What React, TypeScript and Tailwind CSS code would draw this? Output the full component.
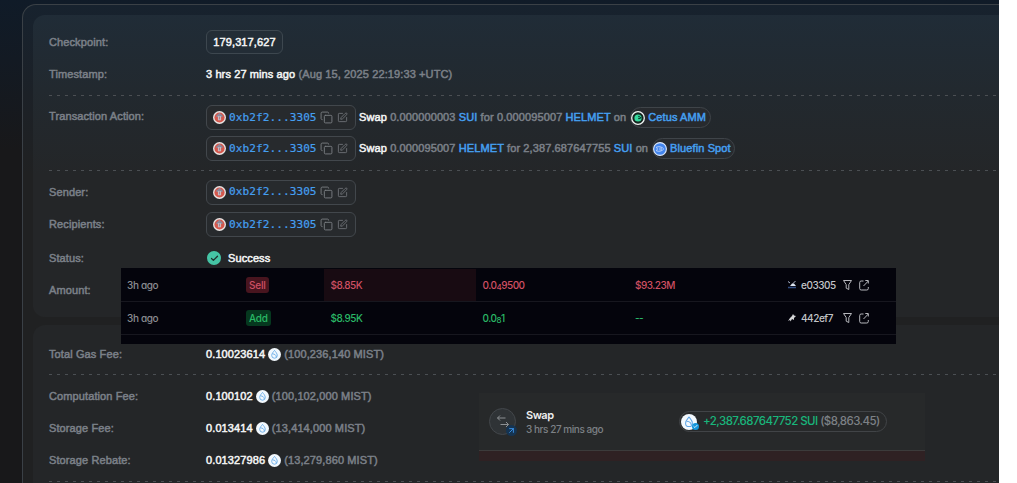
import type { ReactNode } from 'react';
import { Copy, SquarePen, ArrowUpRight, Check } from 'lucide-react';

function Row({ label, className, children }: { label: string; className: string; children?: ReactNode }) {
    return (
        <div className={`flex items-center ${className}`}>
            <div className="w-[157px] shrink-0 text-[#7b8088]">{label}</div>
            <div className="flex items-center whitespace-pre">{children}</div>
        </div>
    );
}

function Divider() {
    return <div className="h-px shrink-0 bg-[repeating-linear-gradient(90deg,#4b4f53_0_3px,transparent_3px_8px)]" />;
}

function Avatar() {
    return (
        <svg viewBox="0 0 14 14" className="size-[13px] shrink-0">
            <circle cx="7" cy="7" r="7" fill="#e8e4e3" />
            <circle cx="7" cy="7" r="5.5" fill="#d4574c" />
            <path d="M3.2 5.5 7 2l3.800 3.500-1 1H4.200z" fill="#8e8798" />
            <path d="M5.300 5.500h3.400v4.500H5.300z" fill="#c9b9be" />
            <path d="M7 6v3" stroke="#8c748e" strokeWidth=".8" />
        </svg>
    );
}

function Address() {
    return (
        <div className="flex h-[25px] w-[150px] shrink-0 items-center rounded-[6px] border border-[#42474c] bg-[#272a2d] pl-[6px]">
            <Avatar />
            <span className="ml-[3px] w-[87px] pt-px font-[DejaVu_Sans_Mono,monospace] text-[11.1px] font-normal tracking-[0.06px] text-[#459ff0] [-webkit-text-stroke:0.2px]">
                0xb2f2...3305
            </span>
            <Copy className="ml-[4px] size-[13px] text-[#767a7e]" strokeWidth={1.8} />
            <SquarePen className="ml-[4px] size-[11px] text-[#767a7e]" strokeWidth={1.8} />
        </div>
    );
}

function SuiIcon({ className }: { className: string }) {
    return (
        <svg viewBox="0 0 14 14" className={`shrink-0 ${className}`}>
            <circle cx="7" cy="7" r="7" fill="#f2f8fd" />
            <path
                d="M7 2.6C5.8 4.1 4 6 4 8a3 3 0 0 0 6 0c0-2-1.8-3.9-3-5.4Z"
                fill="none"
                stroke="#5fa6e6"
                strokeWidth=".9"
            />
            <path d="M5 6.3c2 .2 4 1.2 4 3.5" fill="none" stroke="#5fa6e6" strokeWidth=".9" />
        </svg>
    );
}

function CetusIcon() {
    return (
        <svg viewBox="0 0 14 14" className="size-[14px] shrink-0">
            <circle cx="7" cy="7" r="6.3" fill="#12251f" stroke="#f0f2f2" strokeWidth="1.3" />
            <circle cx="7" cy="7" r="3.6" fill="#35d89c" />
            <path d="M7.2 7.5c1.2.3 2.3-.3 2.8-1.5" fill="none" stroke="#10382b" strokeWidth="1.2" />
            <circle cx="8" cy="5.6" r=".8" fill="#10382b" />
        </svg>
    );
}

function BluefinIcon() {
    return (
        <svg viewBox="0 0 14 14" className="size-[14px] shrink-0">
            <circle cx="7" cy="7" r="6.4" fill="#4385ee" stroke="#dce8fb" strokeWidth="1.1" />
            <path
                d="M3.3 5.2c3-1.2 6-.2 7.4 1.8-1.5 2-4.5 3-7.4 1.8M3.3 5.2c1.3 1 1.3 2.6 0 3.6"
                fill="none"
                stroke="#cfe0fb"
                strokeWidth=".8"
            />
            <circle cx="7.6" cy="7" r="1" fill="none" stroke="#cfe0fb" strokeWidth=".6" />
        </svg>
    );
}

function Protocol({ name, width, children }: { name: string; width: string; children: ReactNode }) {
    return (
        <div className={`ml-[4px] flex h-[21px] items-center gap-[3px] rounded-full border border-[#3f4449] bg-[#272a2e] text-[#459ff0] ${width}`}>
            {children}
            <span>{name}</span>
        </div>
    );
}

function Fee({ value, mist }: { value: string; mist: string }) {
    return (
        <>
            <span className="text-[#f4f5f5]">{value}</span>
            <SuiIcon className="mx-[3px] size-[13px]" />
            <span className="text-[#7b8088]">({mist} MIST)</span>
        </>
    );
}

function TradeTools() {
    return (
        <svg viewBox="0 0 28 12" className="ml-[7px] h-[12px] w-[28px]" fill="none" stroke="#b6b7bc" strokeWidth="1">
            <path d="M1.5 1.5h8L6.8 5.6v4.9l-2.6-1.3V5.6Z" strokeLinejoin="round" />
            <path d="M21.5 2h-2.3a1.5 1.5 0 0 0-1.5 1.5v6A1.5 1.5 0 0 0 19.2 11h5.6a1.5 1.5 0 0 0 1.5-1.5V8M21.5 7l4.8-5M23.3 1.5h3v3" />
        </svg>
    );
}

const TRADES = [
    { kind: 'Sell', value: '$8.85K', lead: '0.0', sub: '4', rest: '9500', cap: '$93.23M', wallet: 'e03305' },
    { kind: 'Add', value: '$8.95K', lead: '0.0', sub: '8', rest: '1', cap: '--', wallet: '442ef7' }
];

function Trades() {
    return (
        <div className="absolute top-[268px] left-[121px] h-[76px] w-[775px] bg-[#04040c] pt-px font-[Inter,sans-serif] text-[10px] font-medium tracking-[-0.5px] [-webkit-text-stroke:0px]">
            {TRADES.map(t => {
                const sell = t.kind === 'Sell';
                return (
                    <div
                        key={t.kind}
                        className={`flex h-[33px] items-stretch border-b border-[#17171f] *:flex *:items-center ${sell ? 'text-[#cf5063]' : 'text-[#2ab866]'}`}
                    >
                        <div className="w-[125px] pl-[6px] tracking-[-0.35px] text-[#8b8c92] [font-feature-settings:'cv11']">3h ago</div>
                        <div className="w-[78px]">
                            <span className={`flex h-[16px] items-center rounded-[3px] px-[3px] tracking-[-0.2px] ${sell ? 'bg-[#48151f]' : 'bg-[#06381f]'}`}>
                                {t.kind}
                            </span>
                        </div>
                        <div className={`w-[152px] pl-[6.5px] ${sell ? 'bg-[#180b12]' : ''}`}>{t.value}</div>
                        <div className="w-[152px] pl-[6.5px]">
                            {t.lead}
                            <span className="relative top-[2px] text-[8px]">{t.sub}</span>
                            {t.rest}
                        </div>
                        <div className="w-[159px] pl-[7px]">{t.cap}</div>
                        <div className="tracking-[-0.45px] text-[#c3c4c8]">
                            <svg viewBox="0 0 10 10" className="mr-[4px] size-[10px]">
                                {sell ? (
                                    <>
                                        <path d="m1 1.5 2 1.5M8.5 1 6 3.5" stroke="#aeb8cc" />
                                        <path d="M3 6 5 3.5h2L9 6Z" fill="#dce3ef" />
                                        <path d="M1 7.5h8" stroke="#304d83" strokeWidth="1.5" />
                                    </>
                                ) : (
                                    <path d="m6 1 1 1.5L9 3 7 5v2L5 6 3.5 8.5 3 7 1 8l2-3 2-2Z" fill="#d5d6d8" />
                                )}
                            </svg>
                            <span className="w-[34px]">{t.wallet}</span>
                            <TradeTools />
                        </div>
                    </div>
                );
            })}
        </div>
    );
}

function SwapCard() {
    return (
        <div className="absolute top-[393px] left-[479px] flex h-[68px] w-[446px] flex-col bg-[#27292a] font-[Inter,sans-serif] [-webkit-text-stroke:0px]">
            <div className="flex h-[58px] items-center border-b border-[#3c3b3b] pl-[10px]">
                <div className="relative flex size-[27px] items-center justify-center rounded-full border border-[#43474b] bg-[#2f3336]">
                    <svg viewBox="0 0 25 25" className="size-[25px]" fill="none" stroke="#8d9194">
                        <path d="M15.5 9H7.5M10 6.5 7.5 9l2.5 2.5M10.5 15.500h8M16 13l2.500 2.500L16 18" />
                    </svg>
                    <span className="absolute top-[16px] left-[16px] flex size-[11px] items-center justify-center rounded-full bg-[#153452] text-[#3c91e8]">
                        <ArrowUpRight className="size-[9px]" strokeWidth={2.5} />
                    </span>
                </div>
                <div className="ml-[10px] w-[153px] leading-[14px]">
                    <div className="text-[11px] font-semibold tracking-[-0.5px] text-[#eeeeef]">Swap</div>
                    <div className="text-[10px] font-medium tracking-[-0.45px] text-[#7d8186]">3 hrs 27 mins ago</div>
                </div>
                <div className="flex h-[21px] w-[208px] items-center rounded-full border border-[#414447] pl-px text-[11.5px] font-medium tracking-[-0.55px]">
                    <div className="relative">
                        <SuiIcon className="size-[16px]" />
                        <span className="absolute right-[-2px] bottom-0 flex size-[7px] items-center justify-center rounded-full bg-[#1396dc] text-white">
                            <Check className="size-[5px]" strokeWidth={4} />
                        </span>
                    </div>
                    <span className="ml-[6px] pt-px whitespace-pre text-[#19b57b]">+2,387.687647752 SUI </span>
                    <span className="pt-px text-[#7d8186]">($8,863.45)</span>
                </div>
            </div>
            <div className="grow bg-[#2f2123]" />
        </div>
    );
}

export default function App() {
    return (
        <div className="h-[483px] overflow-hidden bg-white font-[Liberation_Sans,Arial,sans-serif] text-[11px] tracking-[0.11px] [-webkit-text-stroke:0.5px]">
            <div className="relative h-full w-[999px] overflow-hidden bg-[linear-gradient(180deg,#101b28_0px,#131a23_60px,#18181a_150px)] pt-[4px] pl-[22px]">
                <div className="h-[490px] rounded-tl-[14px] border-t border-l border-[#3a4046] bg-[linear-gradient(180deg,#17222e_0px,#1c2127_90px,#202122_170px)] pt-[10px] pl-[10px]">
                    <div className="h-[302px] rounded-l-[12px] bg-[linear-gradient(180deg,#202c37_0px,#22292f_75px,#242628_160px)] pt-[11px] pl-[16px]">
                        <Row label="Checkpoint:" className="h-[32px]">
                            <span className="flex h-[24px] w-[77px] items-center justify-center rounded-[6px] border border-[#3d474f] bg-[#232d36] text-[#f4f5f5]">
                                179,317,627
                            </span>
                        </Row>
                        <Row label="Timestamp:" className="h-[32px]">
                            <span className="text-[#f4f5f5]">3 hrs 27 mins ago </span>
                            <span className="text-[#7b8088]">(Aug 15, 2025 22:19:33 +UTC)</span>
                        </Row>
                        <div className="h-[5px]" />
                        <Divider />
                        <Row label="Transaction Action:" className="mt-[6px] h-[31px] *:first:pb-[2px]">
                            <Address />
                            <span className="ml-[3px] text-[#f4f5f5]">Swap </span>
                            <span className="text-[#7b8088]">0.000000003 </span>
                            <span className="text-[#459ff0]">SUI </span>
                            <span className="text-[#7b8088]">for 0.000095007 </span>
                            <span className="text-[#459ff0]">HELMET </span>
                            <span className="text-[#7b8088]">on</span>
                            <Protocol name="Cetus AMM" width="w-[81px]">
                                <CetusIcon />
                            </Protocol>
                        </Row>
                        <Row label="" className="h-[31px]">
                            <Address />
                            <span className="ml-[3px] text-[#f4f5f5]">Swap </span>
                            <span className="text-[#7b8088]">0.000095007 </span>
                            <span className="text-[#459ff0]">HELMET </span>
                            <span className="text-[#7b8088]">for 2,387.687647755 </span>
                            <span className="text-[#459ff0]">SUI </span>
                            <span className="text-[#7b8088]">on</span>
                            <Protocol name="Bluefin Spot" width="w-[83px]">
                                <BluefinIcon />
                            </Protocol>
                        </Row>
                        <div className="h-[6px]" />
                        <Divider />
                        <Row label="Sender:" className="mt-[5px] h-[32px]">
                            <Address />
                        </Row>
                        <Row label="Recipients:" className="h-[33px]">
                            <Address />
                        </Row>
                        <Row label="Status:" className="h-[34px]">
                            <span className="ml-px flex size-[14px] items-center justify-center rounded-full bg-[#45c4a5] text-[#20302e]">
                                <Check className="size-[9px]" strokeWidth={3.5} />
                            </span>
                            <span className="ml-[7px] text-[#f4f5f5]">Success</span>
                        </Row>
                        <Row label="Amount:" className="h-[31px]" />
                    </div>
                    <div className="mt-[8px] h-[170px] rounded-tl-[12px] bg-[#242628] pt-[13px] pl-[16px]">
                        <Row label="Total Gas Fee:" className="h-[32px]">
                            <Fee value="0.10023614" mist="100,236,140" />
                        </Row>
                        <div className="h-[4px]" />
                        <Divider />
                        <Row label="Computation Fee:" className="mt-[5px] h-[32px]">
                            <Fee value="0.100102" mist="100,102,000" />
                        </Row>
                        <Row label="Storage Fee:" className="h-[32px]">
                            <Fee value="0.013414" mist="13,414,000" />
                        </Row>
                        <Row label="Storage Rebate:" className="h-[32px]">
                            <Fee value="0.01327986" mist="13,279,860" />
                        </Row>
                        <div className="h-[5px]" />
                        <Divider />
                    </div>
                </div>
                <SwapCard />
                <Trades />
            </div>
        </div>
    );
}
